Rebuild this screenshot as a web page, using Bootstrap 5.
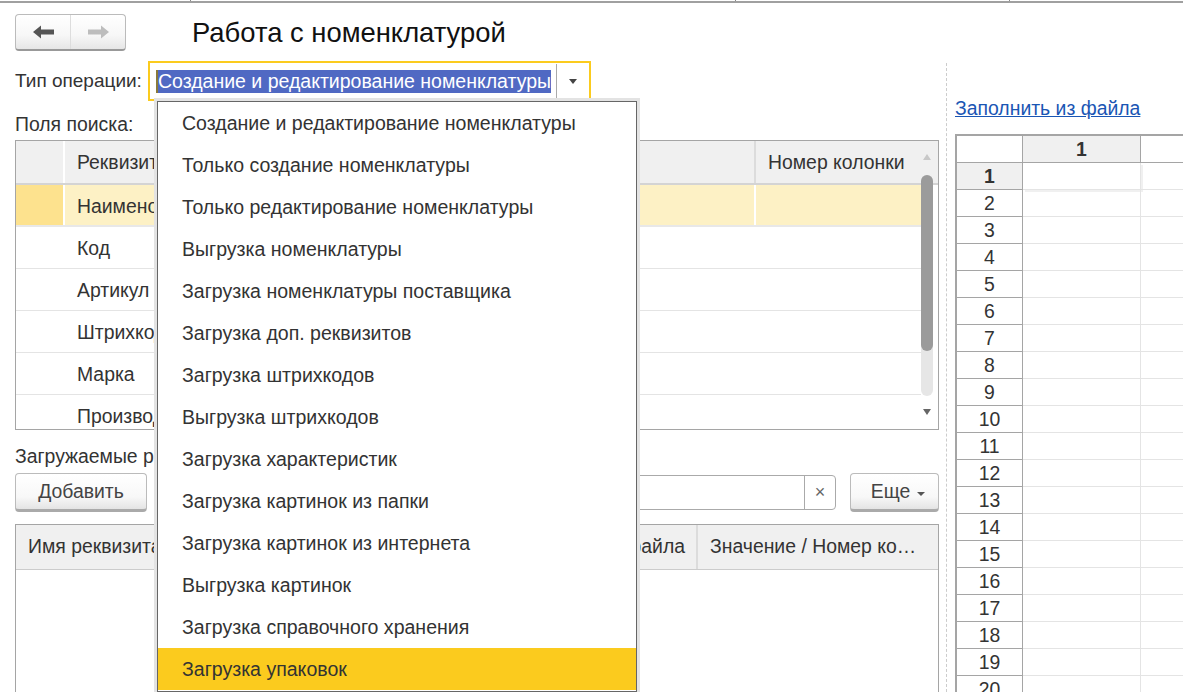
<!DOCTYPE html>
<html lang="ru">
<head>
  <meta charset="UTF-8">
  <title>Работа с номенклатурой</title>
  <meta name="viewport" content="width=device-width, initial-scale=1.0">
  <link href="https://cdn.jsdelivr.net/npm/bootstrap@5.3.3/dist/css/bootstrap.min.css" rel="stylesheet">
  <style>
    html, body { height: 692px; overflow: hidden; }
    body {
      background: #fff;
      color: #333;
      font-family: "Liberation Sans", Arial, sans-serif;
      font-size: 19.4px;
      line-height: 1.2;
    }
    .top-strip { height: 3px; border-top: 1px solid #fff; border-bottom: 2px solid #a0a0a0; position: relative; }
    .top-tick { position: absolute; top: -1px; width: 1px; height: 1px; background: #888; }
    .screen { height: 689px; overflow: hidden; }
    .left-pane { width: 946px; flex: none; padding: 11px 7px 0 15px; position: relative; height: 689px; overflow: hidden; }
    .right-pane { flex: 1; min-width: 0; padding-left: 8px; border-left: 1px dashed #ccc; margin-top: 60px; overflow: hidden; }

    .top-row { height: 37px; }
    .nav-btns { width: 111px; height: 37px; border: 1px solid #bbb; border-bottom: 2px solid #999; border-radius: 4px; background: linear-gradient(#fff, #f7f7f7 60%, #e6e6e6); }
    .nav-btns span { flex: 1; }
    .nav-btns span + span { border-left: 1px solid #ddd; }
    .page-title { font-size: 27.4px; font-weight: 400; color: #111; margin: 0 0 0 66px; line-height: 37px; }

    .op-row { height: 40px; margin-top: 10px; }
    .op-label { width: 133px; flex: none; font-size: 19px; }
    .op-box { width: 443px; height: 40px; border: 2px solid #fbcb1e; padding: 4px 0 4px 6px; }
    .op-value { background: #5069c3; color: #fff; border-left: 2px solid #8a7a3a; height: 23px; line-height: 23px; white-space: nowrap; font-size: 19.5px; }
    .op-arrow { width: 33px; height: 34px; margin-left: 5px; border-left: 1px solid #aaa; }
    .tri-down { width: 0; height: 0; border-left: 4px solid transparent; border-right: 4px solid transparent; border-top: 5px solid #444; }

    .fld-label { margin-top: 13px; height: 26px; line-height: 20px; }
    .grid-box { border: 1px solid #a5a5a5; position: relative; overflow: hidden; }
    .search-grid { height: 290px; }
    .head-row { height: 44px; background: #f0f0f0; border-bottom: 2px solid #d4d4d4; }
    .head-row > div, .body-row > div { padding-left: 12px; line-height: 42px; white-space: nowrap; overflow: hidden; }
    .mark-col { width: 49px; flex: none; padding: 0 !important; border-right: 2px solid #fff; }
    .wide-col { width: 691px; flex: none; border-right: 2px solid #dcdcdc; }
    .num-col { width: 165px; flex: none; }
    .body-row { height: 42px; border-bottom: 1px solid #e4e4e4; width: 905px; }
    .body-row.is-current { background: #fdf1c5; border-bottom: 2px solid #e8e8e8; }
    .body-row.is-current .mark-col { background: #fde28e; }
    .body-row.is-current .wide-col { border-right-color: #fff; }
    .body-row .wide-col { border-right-color: transparent; }
    .scroll-rail { position: absolute; top: 0; right: 0; width: 22px; height: 100%; }
    .scroll-track { position: absolute; top: 34px; left: 5px; width: 12px; height: 221px; background: #e6e6e6; border-radius: 6px; }
    .scroll-thumb { position: absolute; top: 0; left: 0; width: 12px; height: 176px; background: #9b9b9b; border-radius: 6px; }
    .tri-up-small, .tri-down-small { position: absolute; left: 7px; width: 0; height: 0; border-left: 4px solid transparent; border-right: 4px solid transparent; }
    .tri-up-small { top: 13px; border-bottom: 6px solid #c8c8c8; }
    .tri-down-small { bottom: 14px; border-top: 6px solid #666; }

    .load-label { margin-top: 15px; height: 28px; line-height: 22px; }
    .toolbar-row { height: 39px; }
    .btn-plain { height: 39px; border: 1px solid #bbb; border-bottom: 3px solid #aaa; border-radius: 4px; background: linear-gradient(#fff, #f8f8f8 65%, #e4e4e4); color: #444; font-size: 19.4px; padding: 0; }
    .btn-add { width: 132px; }
    .btn-more { width: 89px; margin-left: 14px; padding-left: 7px; }
    .tri-more { display: inline-block; margin-left: 7px; vertical-align: 2px; width: 0; height: 0; border-left: 4px solid transparent; border-right: 4px solid transparent; border-top: 4px solid #555; }
    .search-input { flex: 1; height: 35px; margin-left: 10px; border: 1px solid #aaa; border-radius: 0 4px 4px 0; }
    .search-clear { width: 31px; height: 100%; border-left: 1px solid #aaa; color: #666; font-size: 18px; }
    .load-grid { margin-top: 12px; height: 170px; border-bottom: 0; }
    .load-grid .head-row { height: 45px; border-bottom: 1px solid #ccc; }
    .head-file { flex: 1; text-align: right; padding-right: 11px; border-right: 2px solid #dcdcdc; }
    .head-val { width: 240px; flex: none; }

    .drop-list { position: absolute; left: 157px; top: 98px; width: 480px; height: 591px; background: #fff; border: 1px solid #666; box-shadow: 0 0 0 3px #e3e3e3; padding: 0; margin: 0; list-style: none; z-index: 5; font-size: 19.55px; }
    .drop-list li { height: 42px; line-height: 42px; padding-left: 24px; white-space: nowrap; }
    .drop-list li.is-active { background: #fbcb1e; }

    .file-link { display: inline-block; margin-top: 35px; color: #1a56b4; line-height: 21px; }
    .sheet-wrap { margin-top: 14px; border-top: 2px solid #a5a5a5; border-left: 2px solid #a5a5a5; }
    .sheet-row { height: 27px; display: flex; }
    .sheet-row > div { flex: none; border-bottom: 1px solid #e4e4e4; border-right: 1px solid #e4e4e4; }
    .sc-num { width: 66px; text-align: center; line-height: 26px; border-right-color: #a5a5a5 !important; border-bottom-color: #a5a5a5 !important; }
    .sc-a { width: 118px; }
    .sc-b { width: 60px; }
    .sheet-row.is-head > div { border-bottom-color: #a5a5a5; }
    .sheet-row .sc-on { background: #f0f0f0; font-weight: 700; text-align: center; line-height: 27px; border-right-color: #a5a5a5; }
    .sheet-row.first-row .sc-a { box-shadow: 2px 2px 0 #f0f0f0; }
    .tick-a { left: 190px; }
    .tick-b { left: 735px; }
    .tick-c { left: 1009px; }
  </style>
</head>
<body>
  <div class="top-strip">
    <span class="top-tick tick-a"></span><span class="top-tick tick-b"></span><span class="top-tick tick-c"></span>
  </div>
  <div class="screen d-flex">
    <div class="left-pane">
      <div class="top-row d-flex align-items-start">
        <div class="nav-btns d-flex">
          <span class="d-flex align-items-center justify-content-center">
            <svg width="22" height="16" viewBox="0 0 22 16"><path d="M1 8 9 1.5V5.5H22V10.5H9V14.5Z" fill="#555"/></svg>
          </span>
          <span class="d-flex align-items-center justify-content-center">
            <svg width="22" height="16" viewBox="0 0 22 16"><path d="M22 8 14 1.5V5.5H1V10.5H14V14.5Z" fill="#bdbdbd"/></svg>
          </span>
        </div>
        <h1 class="page-title">Работа с номенклатурой</h1>
      </div>

      <div class="op-row d-flex align-items-center">
        <div class="op-label">Тип операции:</div>
        <div class="op-box d-flex align-items-center">
          <div class="op-value">Создание и редактирование номенклатуры</div>
          <div class="op-arrow d-flex align-items-center justify-content-center"><span class="tri-down"></span></div>
        </div>
      </div>

      <div class="fld-label">Поля поиска:</div>
      <div class="grid-box search-grid">
        <div class="head-row d-flex">
          <div class="mark-col"></div>
          <div class="wide-col">Реквизит</div>
          <div class="num-col">Номер колонки</div>
        </div>
        <div class="body-row is-current d-flex">
          <div class="mark-col"></div>
          <div class="wide-col">Наименование</div>
          <div class="num-col"></div>
        </div>
        <div class="body-row d-flex"><div class="mark-col"></div><div class="wide-col">Код</div></div>
        <div class="body-row d-flex"><div class="mark-col"></div><div class="wide-col">Артикул</div></div>
        <div class="body-row d-flex"><div class="mark-col"></div><div class="wide-col">Штрихкод</div></div>
        <div class="body-row d-flex"><div class="mark-col"></div><div class="wide-col">Марка</div></div>
        <div class="body-row d-flex"><div class="mark-col"></div><div class="wide-col">Производитель</div></div>
        <div class="scroll-rail">
          <span class="tri-up-small"></span>
          <div class="scroll-track"><div class="scroll-thumb"></div></div>
          <span class="tri-down-small"></span>
        </div>
      </div>

      <div class="load-label">Загружаемые реквизиты:</div>
      <div class="toolbar-row d-flex align-items-center">
        <button type="button" class="btn-plain btn-add">Добавить</button>
        <div class="search-input d-flex justify-content-end">
          <div class="search-clear d-flex align-items-center justify-content-center">×</div>
        </div>
        <button type="button" class="btn-plain btn-more">Еще<span class="tri-more"></span></button>
      </div>
      <div class="grid-box load-grid">
        <div class="head-row d-flex">
          <div class="head-name">Имя реквизита</div>
          <div class="head-file">Колонка файла</div>
          <div class="head-val">Значение / Номер ко…</div>
        </div>
      </div>

      <ul class="drop-list">
        <li>Создание и редактирование номенклатуры</li>
        <li>Только создание номенклатуры</li>
        <li>Только редактирование номенклатуры</li>
        <li>Выгрузка номенклатуры</li>
        <li>Загрузка номенклатуры поставщика</li>
        <li>Загрузка доп. реквизитов</li>
        <li>Загрузка штрихкодов</li>
        <li>Выгрузка штрихкодов</li>
        <li>Загрузка характеристик</li>
        <li>Загрузка картинок из папки</li>
        <li>Загрузка картинок из интернета</li>
        <li>Выгрузка картинок</li>
        <li>Загрузка справочного хранения</li>
        <li class="is-active">Загрузка упаковок</li>
      </ul>
    </div>

    <div class="right-pane">
      <a href="#" class="file-link">Заполнить из файла</a>
      <div class="sheet-wrap" id="sheet"></div>
    </div>
  </div>

  <script src="https://cdn.jsdelivr.net/npm/bootstrap@5.3.3/dist/js/bootstrap.bundle.min.js"></script>
  <script>
    // Строки табличного документа
    const sheet = document.getElementById('sheet');
    let html = '<div class="sheet-row is-head"><div class="sc-num"></div><div class="sc-a sc-on">1</div><div class="sc-b"></div></div>';
    for (let i = 1; i <= 20; i++) {
      html += `<div class="sheet-row${i === 1 ? ' first-row' : ''}"><div class="sc-num${i === 1 ? ' sc-on' : ''}">${i}</div><div class="sc-a"></div><div class="sc-b"></div></div>`;
    }
    sheet.innerHTML = html;
  </script>
</body>
</html>
